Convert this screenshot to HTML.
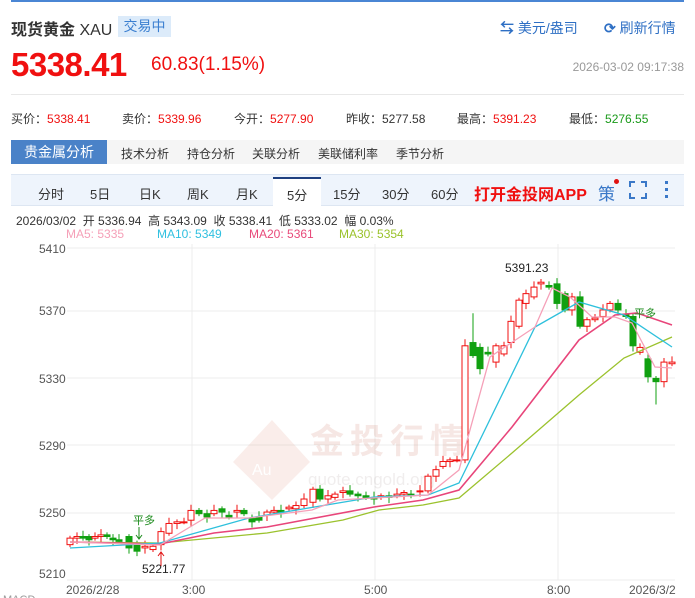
<!DOCTYPE html>
<html><head><meta charset="utf-8"><style>
*{margin:0;padding:0;box-sizing:border-box}
body{width:695px;height:598px;overflow:hidden;background:#fff;font-family:"Liberation Sans","Noto Sans CJK SC",sans-serif;color:#333;position:relative}
.a{position:absolute;white-space:nowrap}
</style></head><body>
<div class="a" style="left:11px;top:0;width:673px;height:2px;background:#4a86d4"></div>
<div class="a" style="left:11px;top:16px;font-size:16px;color:#333;font-weight:bold">现货黄金 <span style="font-weight:normal">XAU</span></div>
<div class="a" style="left:118px;top:16px;width:53px;height:21px;background:#dcebfa;color:#3b7fd0;font-size:14px;line-height:21px;text-align:center">交易中</div>
<div class="a" style="left:500px;top:18px;font-size:14px;color:#2e6fc4"><span style="font-weight:bold">⇆</span> 美元/盎司</div>
<div class="a" style="left:604px;top:18px;font-size:14px;color:#2e6fc4"><span style="font-weight:bold">⟳</span> 刷新行情</div>
<div class="a" style="left:11px;top:46px;font-size:33px;font-weight:bold;color:#f01010;letter-spacing:-0.5px">5338.41</div>
<div class="a" style="left:151px;top:54px;font-size:19px;color:#f01010">60.83(1.15%)</div>
<div class="a" style="right:11px;top:60px;font-size:12px;color:#999">2026-03-02 09:17:38</div>
<div class="a" style="left:11px;top:94px;width:673px;height:1px;background:#e8e8e8"></div>
<div class="a" style="left:11px;top:110px;font-size:12px;color:#333">买价：<span style="color:#f01010">5338.41</span></div>
<div class="a" style="left:122px;top:110px;font-size:12px">卖价：<span style="color:#f01010">5339.96</span></div>
<div class="a" style="left:234px;top:110px;font-size:12px">今开：<span style="color:#f01010">5277.90</span></div>
<div class="a" style="left:346px;top:110px;font-size:12px">昨收：5277.58</div>
<div class="a" style="left:457px;top:110px;font-size:12px">最高：<span style="color:#f01010">5391.23</span></div>
<div class="a" style="left:569px;top:110px;font-size:12px">最低：<span style="color:#1a9a1a">5276.55</span></div>
<div class="a" style="left:11px;top:140px;width:673px;height:24px;background:#f5f5f5"></div>
<div class="a" style="left:11px;top:140px;width:96px;height:24px;background:#4a82c8;color:#fff;font-size:14px;line-height:24px;text-align:center">贵金属分析</div>
<div class="a" style="left:121px;top:145px;font-size:12px">技术分析</div>
<div class="a" style="left:187px;top:145px;font-size:12px">持仓分析</div>
<div class="a" style="left:252px;top:145px;font-size:12px">关联分析</div>
<div class="a" style="left:318px;top:145px;font-size:12px">美联储利率</div>
<div class="a" style="left:396px;top:145px;font-size:12px">季节分析</div>
<div class="a" style="left:11px;top:174px;width:673px;height:32px;background:#eef4fc;border-top:1px solid #dde6f2;border-bottom:1px solid #dde6f2"></div>
<div class="a" style="left:273px;top:177px;width:48px;height:30px;background:#fff;border-top:2px solid #1e3f80"></div>
<div class="a" style="left:38px;top:184px;font-size:13px">分时</div>
<div class="a" style="left:90px;top:184px;font-size:13px">5日</div>
<div class="a" style="left:139px;top:184px;font-size:13px">日K</div>
<div class="a" style="left:187px;top:184px;font-size:13px">周K</div>
<div class="a" style="left:236px;top:184px;font-size:13px">月K</div>
<div class="a" style="left:287px;top:185px;font-size:13px">5分</div>
<div class="a" style="left:333px;top:184px;font-size:13px">15分</div>
<div class="a" style="left:382px;top:184px;font-size:13px">30分</div>
<div class="a" style="left:431px;top:184px;font-size:13px">60分</div>
<div class="a" style="left:474px;top:181px;font-size:16px;font-weight:bold;color:#f01010">打开金投网APP</div>
<div class="a" style="left:598px;top:180px;font-size:17px;color:#3a78c8">策</div>
<div class="a" style="left:614px;top:179px;width:5px;height:5px;border-radius:50%;background:#e01010"></div>
<svg class="a" style="left:629px;top:181px" width="18" height="18"><path d="M1 6V1H6M12 1H17V6M17 12V17H12M6 17H1V12" fill="none" stroke="#3a78c8" stroke-width="2"/></svg>
<svg class="a" style="left:664px;top:180px" width="6" height="20"><rect x="1" y="1" width="3" height="3" fill="#3a78c8"/><rect x="1" y="8" width="3" height="3" fill="#3a78c8"/><rect x="1" y="15" width="3" height="3" fill="#3a78c8"/></svg>
<div class="a" style="left:16px;top:212px;font-size:12px;color:#333">2026/03/02 &nbsp;开 5336.94 &nbsp;高 5343.09 &nbsp;收 5338.41 &nbsp;低 5333.02 &nbsp;幅 0.03%</div>
<div class="a" style="left:66px;top:227px;font-size:12px;color:#f5a0b8">MA5: 5335</div>
<div class="a" style="left:157px;top:227px;font-size:12px;color:#30c0e0">MA10: 5349</div>
<div class="a" style="left:249px;top:227px;font-size:12px;color:#e84a7a">MA20: 5361</div>
<div class="a" style="left:339px;top:227px;font-size:12px;color:#9ac22a">MA30: 5354</div>
<svg id="ch" class="a" style="left:0;top:240px" width="695" height="358" viewBox="0 240 695 358" font-family="Liberation Sans,Noto Sans CJK SC,sans-serif">
<g stroke="#ececec" stroke-width="1">
<line x1="67" y1="248" x2="675" y2="248"/><line x1="67" y1="311" x2="675" y2="311"/><line x1="67" y1="378" x2="675" y2="378"/><line x1="67" y1="445" x2="675" y2="445"/><line x1="67" y1="513" x2="675" y2="513"/><line x1="67" y1="580" x2="675" y2="580"/>
<line x1="192" y1="244" x2="192" y2="580"/><line x1="375" y1="244" x2="375" y2="580"/><line x1="558" y1="244" x2="558" y2="580"/>
</g>
<g font-size="12" fill="#555"><text x="39" y="253">5410</text><text x="39" y="315">5370</text><text x="39" y="383">5330</text><text x="39" y="450">5290</text><text x="39" y="517">5250</text><text x="39" y="578">5210</text>
<text x="66" y="594">2026/2/28</text><text x="182" y="594">3:00</text><text x="364" y="594">5:00</text><text x="547" y="594">8:00</text><text x="629" y="594">2026/3/2</text></g>
<g opacity="0.18"><path d="M272 420L310 462L272 500L233 462Z" fill="#e6a090"/><text x="252" y="475" font-size="16" fill="#fff">Au</text>
<text x="310" y="453" font-size="34" font-weight="bold" fill="#d08070" letter-spacing="6">金投行情</text>
<text x="308" y="485" font-size="17" fill="#b0a0a0">quote.cngold.org</text></g>
<g id="cd"></g>
<g fill="none" stroke-width="1.3">
<polyline stroke="#9bc22d" points="70,542 160,543 267,533 343,520 379,510 423,505 459,498 512,453 579,395 624,358 672,337"/>
<polyline stroke="#e8457a" stroke-width="1.6" points="70,542 160,544 214,533 267,527 374,507 423,500 459,490 512,427 579,340 615,315 637,313 672,325"/>
<polyline stroke="#2ec0dc" points="70,548 160,543 249,518 374,497 428,495 459,483 535,327 579,302 624,315 672,347"/>
<polyline stroke="#f5a0b8" points="70,542 160,545 205,518 249,518 312,510 338,500 428,495 459,470 490,357 535,327 552,288 570,297 592,317 615,317 632,323 655,367 672,368"/>
</g>
<text x="505" y="272" font-size="12" fill="#222">5391.23</text>
<text x="142" y="573" font-size="12" fill="#222">5221.77</text>
<text x="133" y="524" font-size="11" fill="#1a8a1a">平多</text>
<path d="M139 527V539M136 535L139 539L142 535" stroke="#1a8a1a" fill="none"/>
<text x="634" y="317" font-size="11" fill="#1a8a1a">平多</text>
<path d="M161 566V552M158 556L161 552L164 556" stroke="#e01010" fill="none"/>
<text x="3" y="603" font-size="11" fill="#999">MACD</text>
</svg>
<script>
var d=[[70,5228,5232],[77,5232,5233],[83,5233,5232],[89,5233,5231],[95,5232,5233],[101,5233,5234],[107,5234,5233],[113,5232,5231],[119,5231,5230],[129,5233,5226],[137,5228,5224],[145,5226,5227],[153,5225,5227],[161,5228,5236],[169,5235,5241],[177,5241,5242],[184,5242,5242],[191,5243,5249],[199,5249,5247],[207,5247,5245],[214,5247,5249],[222,5250,5248],[229,5246,5245],[237,5248,5249],[244,5249,5247],[252,5244,5242],[259,5245,5243],[267,5246,5248],[274,5248,5249],[281,5249,5248],[289,5250,5251],[296,5250,5252],[304,5252,5256],[313,5254,5262],[320,5262,5256],[328,5256,5258],[335,5257,5259],[343,5260,5261],[350,5261,5259],[358,5259,5258],[366,5258,5257],[374,5257,5256],[381,5257,5258],[389,5258,5257],[397,5258,5259],[404,5259,5260],[411,5259,5258],[420,5261,5261],[428,5261,5270],[436,5270,5274],[443,5276,5279],[450,5279,5280],[457,5280,5280],[465,5280,5350],[473,5352,5344],[480,5349,5336],[488,5346,5345],[496,5340,5350],[504,5345,5350],[511,5352,5365],[519,5362,5378],[526,5376,5382],[534,5380,5386],[541,5388,5389],[549,5387,5386],[557,5388,5376],[565,5382,5372],[572,5372,5380],[580,5380,5362],[587,5362,5366],[595,5366,5367],[603,5368,5372],[610,5372,5376],[618,5376,5372],[626,5369,5368],[633,5368,5350],[640,5346,5349],[648,5342,5331],[656,5330,5328],[664,5328,5340],[672,5339,5340]];
function Y(p){return 248+(5410-p)*1.63}
var s='';d.forEach(function(c,i){var x=c[0],o=c[1],cl=c[2],up=cl>=o,col=up?'#f01010':'#10a010';var hi=Math.max(o,cl)+1.5+(i%3),lo=Math.min(o,cl)-1.5-(i%2)*2;if(i==53){hi=5354;lo=5278}if(i==54)hi=5370;if(i==63)hi=5391;if(i==78)lo=5314;if(i==10)lo=5221;
s+='<line x1="'+x+'" x2="'+x+'" y1="'+Y(hi)+'" y2="'+Y(lo)+'" stroke="'+col+'"/>';var t=Y(Math.max(o,cl)),h=Math.max(1,Y(Math.min(o,cl))-t);
s+='<rect x="'+(x-3)+'" y="'+t+'" width="6" height="'+h+'" fill="'+(up?'#fff':col)+'" stroke="'+col+'"/>';});
document.getElementById('cd').innerHTML=s;
</script>
</body></html>
